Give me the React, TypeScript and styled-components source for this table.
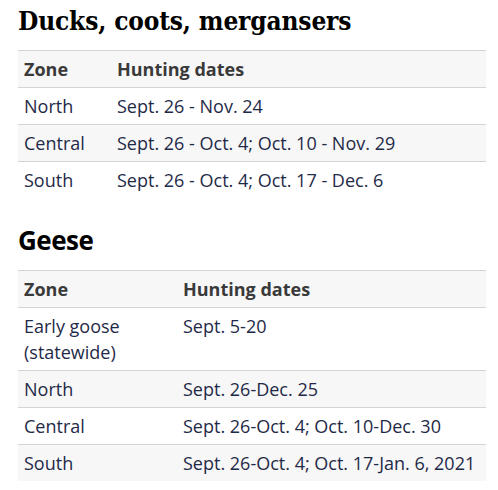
import React from "react";
import styled, { createGlobalStyle } from "styled-components";

const Global = createGlobalStyle`
  html, body { margin: 0; padding: 0; background: #fff; }
  body { font-family: "Open Sans", "Liberation Sans", sans-serif; }
`;

const Page = styled.div`
  padding: 4px 12px 0 18px;
  width: 468px;
`;

const SlabTitle = styled.h2`
  margin: 0 0 12px;
  font-family: "DejaVu Serif", "Liberation Serif", serif;
  font-stretch: condensed;
  font-weight: 700;
  font-size: 26px;
  line-height: 34px;
  color: #000;
  letter-spacing: -0.15px;
`;

const SansTitle = styled.h2`
  margin: 25px 0 13px;
  font-family: "Open Sans", "Liberation Sans", sans-serif;
  font-weight: 700;
  font-size: 26px;
  line-height: 34px;
  color: #000;
  letter-spacing: -0.5px;
`;

const Table = styled.table`
  width: 100%;
  border-collapse: collapse;
  font-size: 18px;
  line-height: 26px;
  color: #1f2a48;
`;

const Row = styled.tr<{ $shade: boolean }>`
  background: ${(p) => (p.$shade ? "#f7f7f7" : "#fff")};
  border-top: 1px solid #d4d4d4;
`;

const Th = styled.th<{ $w?: number }>`
  text-align: left;
  font-weight: 700;
  color: #3a3a3a;
  padding: 5px 6px 5px 6px;
  vertical-align: top;
  ${(p) => (p.$w ? `width: ${p.$w}px;` : "")}
`;

const Td = styled.td`
  padding: 5px 6px;
  vertical-align: top;
`;

type Data = { zone: React.ReactNode; dates: string }[];

const ducks: Data = [
  { zone: "North", dates: "Sept. 26 - Nov. 24" },
  { zone: "Central", dates: "Sept. 26 - Oct. 4; Oct. 10 - Nov. 29" },
  { zone: "South", dates: "Sept. 26 - Oct. 4; Oct. 17 - Dec. 6" },
];

const geese: Data = [
  { zone: <>Early goose<br />(statewide)</>, dates: "Sept. 5-20" },
  { zone: "North", dates: "Sept. 26-Dec. 25" },
  { zone: "Central", dates: "Sept. 26-Oct. 4; Oct. 10-Dec. 30" },
  { zone: "South", dates: "Sept. 26-Oct. 4; Oct. 17-Jan. 6, 2021" },
];

function HuntTable({ rows, zoneWidth }: { rows: Data; zoneWidth: number }) {
  return (
    <Table>
      <thead>
        <Row $shade>
          <Th $w={zoneWidth}>Zone</Th>
          <Th>Hunting dates</Th>
        </Row>
      </thead>
      <tbody>
        {rows.map((r, i) => (
          <Row key={i} $shade={i % 2 === 1}>
            <Td>{r.zone}</Td>
            <Td>{r.dates}</Td>
          </Row>
        ))}
      </tbody>
    </Table>
  );
}

export default function App() {
  return (
    <Page>
      <Global />
      <SlabTitle>Ducks, coots, mergansers</SlabTitle>
      <HuntTable rows={ducks} zoneWidth={81} />
      <SansTitle>Geese</SansTitle>
      <HuntTable rows={geese} zoneWidth={147} />
    </Page>
  );
}
